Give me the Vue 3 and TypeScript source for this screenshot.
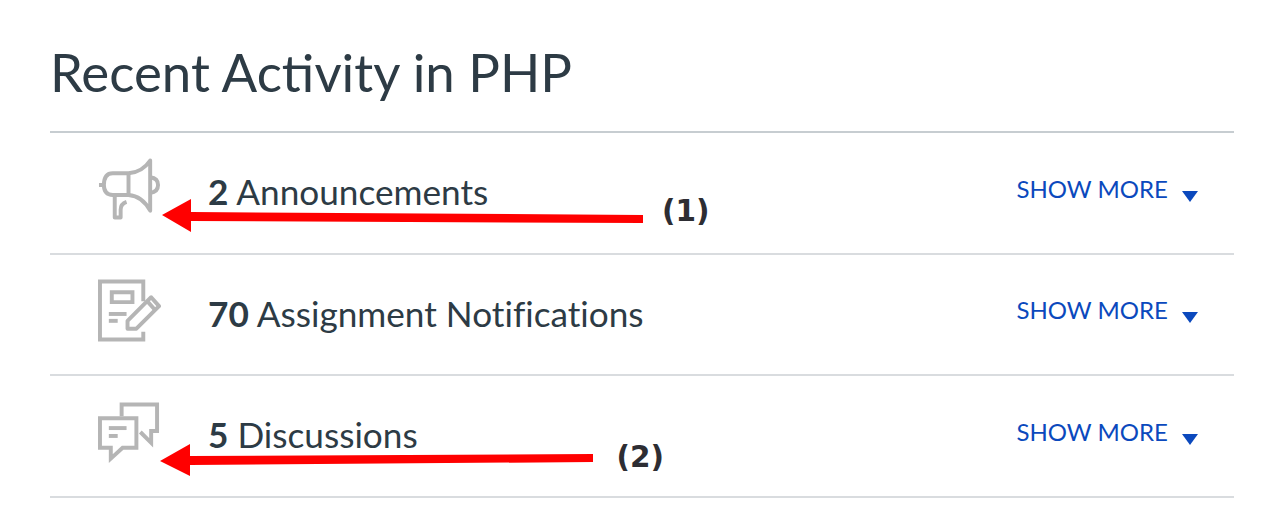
<template>
  <main class="page">
    <h1 class="title">Recent Activity in PHP</h1>
    <ul class="list">
      <li v-for="row in rows" :key="row.label" class="row">
        <span class="icon">
          <svg v-if="row.icon === 'announce'" width="63" height="64" viewBox="0 0 64 64" fill="none" stroke="#b5b5b5" stroke-width="4">
            <path d="M1 27H6Q6 15 15 15H31Q45 14 53 2V53Q45 38 31 37H15Q6 37 6 27" stroke-linejoin="round" />
            <path d="M31 15V37M17 37V60H23V52Q23 46 29 44" stroke-linejoin="round" />
            <path d="M53 19Q61 20 61 27Q61 34 53 35" />
          </svg>
          <svg v-else-if="row.icon === 'assign'" width="63" height="64" viewBox="0 0 64 64" fill="none" stroke="#b5b5b5" stroke-width="4">
            <path d="M46 22V2H2V61H46V53" />
            <path d="M14 13H35V23H14Z" />
            <path d="M11 35H29" />
            <path d="M11 42H20" />
            <path d="M30 50V42L54 18L62 27L39 50Z" stroke-linejoin="round" />
            <path d="M50 22L58 31" />
          </svg>
          <svg v-else width="63" height="62" viewBox="0 0 64 62" fill="none" stroke="#b5b5b5" stroke-width="4">
            <path d="M24 14V2H60V29H54V41L43 30" />
            <path d="M2 16H39V46H25L13 57V46H2Z" />
            <path d="M11 26H29" />
            <path d="M11 34H20" />
          </svg>
        </span>
        <span class="label"><b>{{ row.count }}</b> {{ row.label }}</span>
        <a class="more">SHOW MORE<i class="caret"></i></a>
      </li>
    </ul>

    <!-- annotations drawn over the screenshot -->
    <svg class="arrow" width="1282" height="528" viewBox="0 0 1282 528">
      <path d="M162 215L191 199V212L643 215V223L191 221V232Z" fill="#ff0000" />
      <path d="M160 461L190 444V456L593 454V462L190 465V476Z" fill="#ff0000" />
    </svg>
    <span class="note note-one">(1)</span>
    <span class="note note-two">(2)</span>
  </main>
</template>

<script setup lang="ts">
interface Row {
  icon: string;
  count: number;
  label: string;
}

const rows: Row[] = [
  { icon: "announce", count: 2, label: "Announcements" },
  { icon: "assign", count: 70, label: "Assignment Notifications" },
  { icon: "discuss", count: 5, label: "Discussions" },
];
</script>

<style>
html,
body {
  background: #fff;
}
</style>

<style scoped>
.page {
  position: relative;
  height: 528px;
  padding: 40px 48px 0 50px;
  box-sizing: border-box;
  overflow: hidden;
  font-family: Lato, sans-serif;
  color: #2d3b45;
}
.title {
  margin: 0;
  height: 91px;
  font-size: 52.8px;
  line-height: 64px;
  font-weight: 400;
}
.list {
  margin: 0;
  padding: 0;
  list-style: none;
  border-top: 2px solid #c7cdd1;
}
.row {
  display: flex;
  align-items: center;
  height: 119.5px;
  padding-left: 48px;
  border-bottom: 2px solid #d9dcdf;
}
.icon {
  display: flex;
  width: 110px;
  flex: none;
  margin-bottom: 6px;
}
.label {
  flex: 1;
  font-size: 35.2px;
  margin-bottom: 3px;
  font-variant-ligatures: none;
}
.more {
  display: flex;
  align-items: center;
  width: 217.5px;
  flex: none;
  font-size: 24px;
  margin-bottom: 9px;
  color: #0b49bd;
}
.caret {
  margin: 16px 0 0 14px;
  border-style: solid;
  border-width: 11px 8px 0;
  border-color: #0b49bd transparent transparent;
}
.arrow {
  position: absolute;
  left: 0;
  top: 0;
}
.note {
  position: absolute;
  font-family: "DejaVu Sans", sans-serif;
  font-size: 29.5px;
  font-weight: 700;
  line-height: 34px;
  color: #2d2d33;
}
.note-one {
  left: 662px;
  top: 194px;
}
.note-two {
  left: 616.5px;
  top: 440px;
}
</style>
